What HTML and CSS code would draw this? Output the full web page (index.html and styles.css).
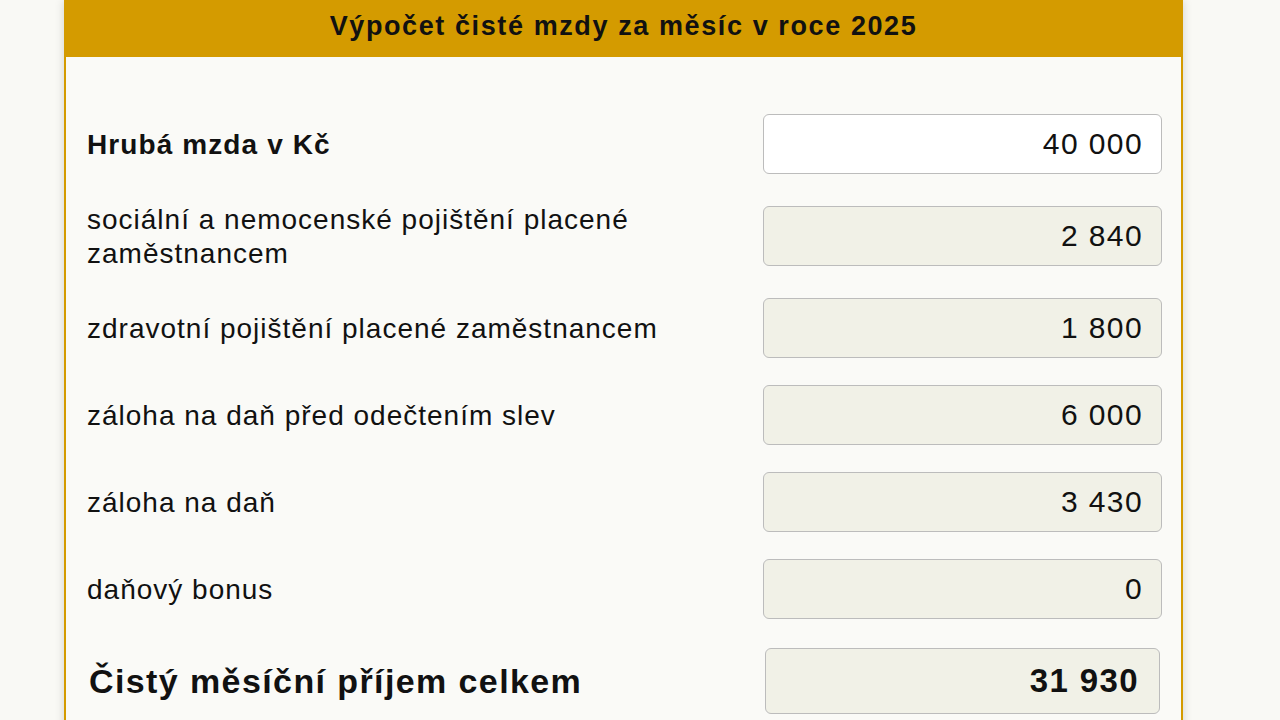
FILE: index.html
```html
<!DOCTYPE html>
<html lang="cs">
<head>
<meta charset="utf-8">
<title>Výpočet čisté mzdy</title>
<link rel="stylesheet" href="styles.css">
</head>
<body>
<div class="card">
  <div class="card-header">
    <h1 class="title">Výpočet čisté mzdy za měsíc v roce 2025</h1>
  </div>
  <div class="card-body">
    <div class="row">
      <label class="label label-strong" for="gross">Hrubá mzda v Kč</label>
      <input class="field field-edit" id="gross" type="text" value="40 000">
    </div>
    <div class="row">
      <label class="label label-two">sociální a nemocenské pojištění placené zaměstnancem</label>
      <input class="field" type="text" value="2 840" readonly>
    </div>
    <div class="row">
      <label class="label">zdravotní pojištění placené zaměstnancem</label>
      <input class="field" type="text" value="1 800" readonly>
    </div>
    <div class="row">
      <label class="label">záloha na daň před odečtením slev</label>
      <input class="field" type="text" value="6 000" readonly>
    </div>
    <div class="row">
      <label class="label">záloha na daň</label>
      <input class="field" type="text" value="3 430" readonly>
    </div>
    <div class="row">
      <label class="label">daňový bonus</label>
      <input class="field" type="text" value="0" readonly>
    </div>
    <div class="row row-total">
      <label class="label label-total">Čistý měsíční příjem celkem</label>
      <input class="field field-total" type="text" value="31 930" readonly>
    </div>
  </div>
</div>
</body>
</html>
```
FILE: styles.css
```css
* {
  box-sizing: border-box;
}

html, body {
  margin: 0;
  padding: 0;
  background: #f9f9f5;
  font-family: "Liberation Sans", Arial, sans-serif;
  color: #111;
}

body {
  height: 720px;
  overflow: hidden;
}

.card {
  margin-left: 64px;
  width: 1119px;
  min-height: 760px;
  background: #fafaf7;
  border-left: 2px solid #d49b00;
  border-right: 2px solid #d49b00;
  box-shadow: 0 0 9px rgba(0, 0, 0, 0.16);
}

.card-header {
  height: 57px;
  margin: 0 -2px;
  background: #d49b00;
  display: flex;
  align-items: center;
  justify-content: center;
  padding-bottom: 4px;
}

.title {
  margin: 0;
  font-size: 27px;
  font-weight: bold;
  letter-spacing: 1.6px;
  color: #111;
}

.card-body {
  padding: 57px 19px 0 21px;
  display: flex;
  flex-direction: column;
  gap: 27px;
}

.row {
  display: flex;
  align-items: center;
  justify-content: space-between;
}

.label {
  font-size: 28px;
  letter-spacing: 1px;
  line-height: 35px;
  max-width: 600px;
}

.label-two {
  line-height: 34px;
  padding-top: 2px;
}

.label-strong {
  font-weight: bold;
  font-size: 28px;
  letter-spacing: 1.1px;
}

.label-total {
  font-weight: bold;
  font-size: 34px;
  letter-spacing: 1.4px;
  padding-left: 2px;
}

.field {
  width: 399px;
  height: 60px;
  border: 1.5px solid #bcbcbc;
  border-radius: 6px;
  background: #f1f1e7;
  font-family: "Liberation Sans", Arial, sans-serif;
  font-size: 30px;
  letter-spacing: 1.4px;
  color: #111;
  text-align: right;
  padding: 0 18px 0 12px;
  outline: none;
}

.field-edit {
  background: #ffffff;
}

.row-total {
  margin-top: 2px;
}

.field-total {
  width: 395px;
  height: 66px;
  margin-right: 2px;
  font-weight: bold;
  font-size: 33px;
  letter-spacing: 1.4px;
  padding-right: 20px;
}
```
